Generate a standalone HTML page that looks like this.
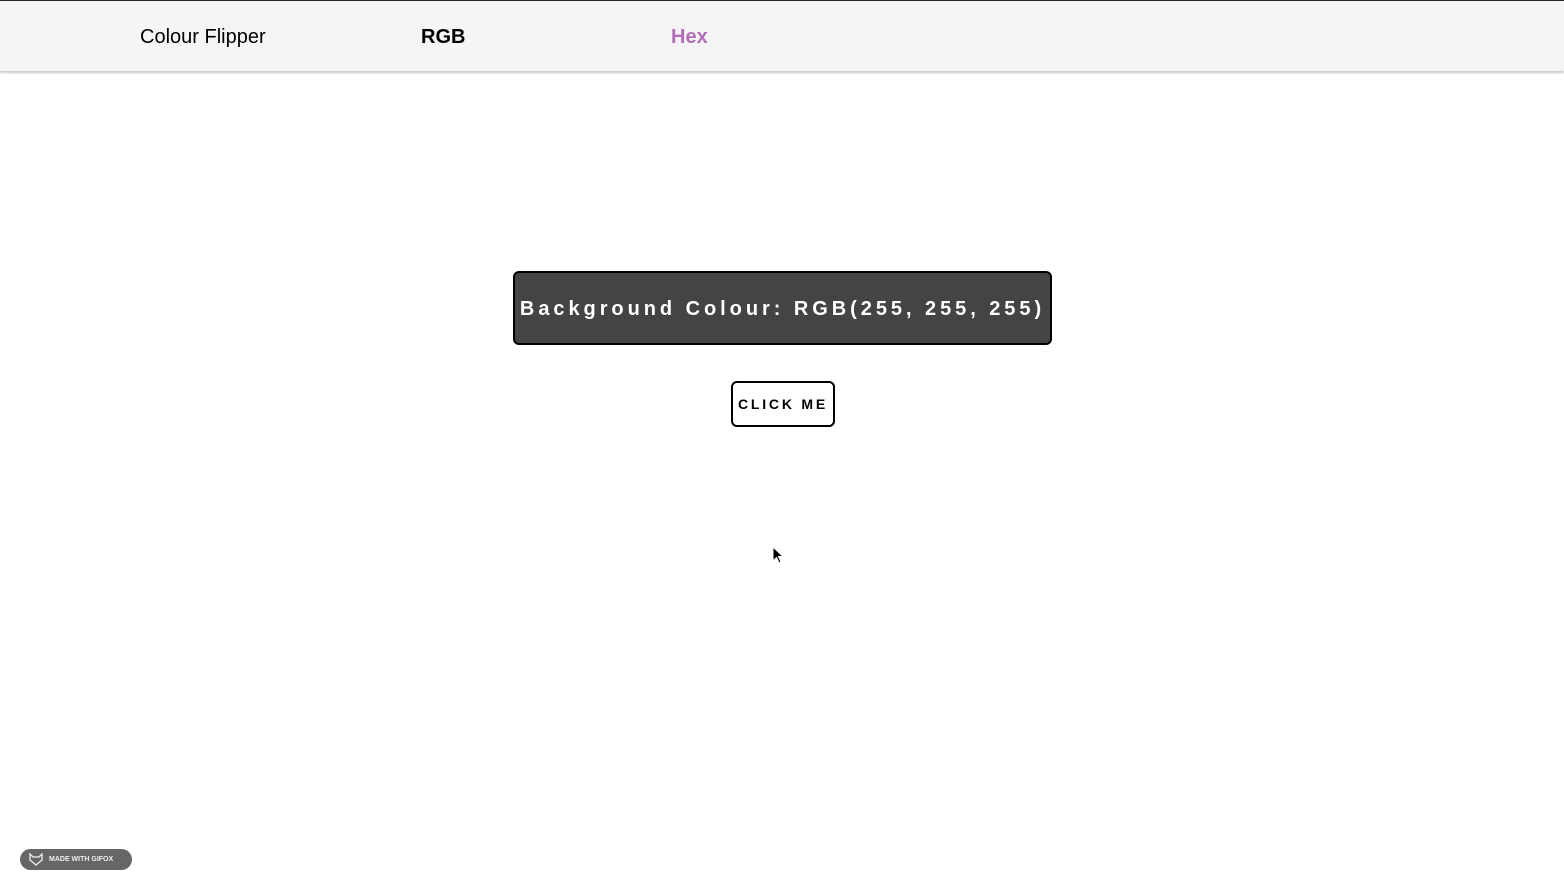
<!DOCTYPE html>
<html><head><meta charset="utf-8"><style>
body{margin:0;width:1564px;height:890px;background:#fff;position:relative;overflow:hidden;font-family:"Liberation Sans",sans-serif}
.top{position:absolute;left:0;top:0;width:1564px;height:1px;background:#222}
nav{position:absolute;left:0;top:1px;width:1564px;height:70px;background:#f6f5f5;box-shadow:0 2px 2px #ccc}
nav span{position:absolute;top:25px;font-size:20px}
.box{position:absolute;left:513px;top:271px;width:535px;height:70px;background:#444543;border:2px solid #000;border-radius:6px;color:#fff;font-weight:bold;font-size:20px;letter-spacing:3.95px;text-indent:0;text-align:center;line-height:72px;white-space:nowrap}
.btn{position:absolute;left:731px;top:381px;width:100px;height:42px;border:2px solid #000;border-radius:6px;text-align:center;line-height:43px;font-weight:bold;font-size:14px;letter-spacing:2.8px}
.gif{position:absolute;left:20px;top:849px;width:112px;height:21px;background:#666;border-radius:11px;color:#eee;font-size:7px;font-weight:bold;line-height:21px;padding-left:29px;box-sizing:border-box}
</style></head><body>
<div class="top"></div>
<nav><span style="left:140px">Colour Flipper</span><span style="left:421px;font-weight:bold">RGB</span><span style="left:671px;font-weight:bold;color:#b06fb6">Hex</span></nav>
<div class="box">Background Colour: RGB(255, 255, 255)</div>
<div class="btn">CLICK ME</div>
<div class="gif"><svg style="position:absolute;left:9px;top:4px" width="14" height="13" viewBox="0 0 14 13"><path d="M1 1L4 4H10L13 1V7L7 12L1 7Z" fill="none" stroke="#eee" stroke-width="1.3"/></svg>MADE WITH GIFOX</div>
<svg style="position:absolute;left:772px;top:546px" width="12" height="18" viewBox="0 0 12 18"><path d="M1 1V15L4.5 11.5L7 17L9 16L6.5 10.5H11Z" fill="#000" stroke="#fff" stroke-width="1"/></svg>
</body></html>
